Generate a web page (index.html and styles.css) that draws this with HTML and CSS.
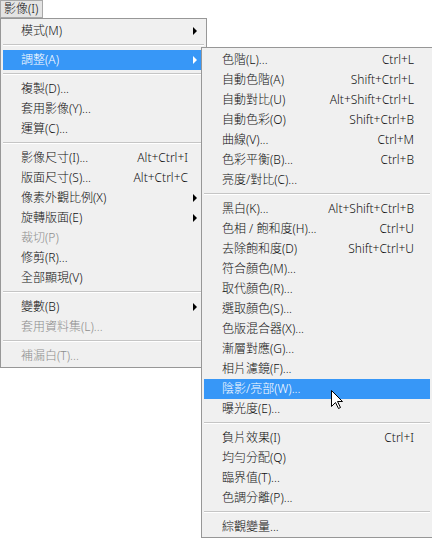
FILE: index.html
```html
<!DOCTYPE html>
<html lang="zh-Hant">
<head>
<meta charset="utf-8">
<title>影像選單</title>
<link rel="stylesheet" href="styles.css">
</head>
<body>
<div class="menubar"><span class="menutitle">影像(I)</span></div>
<ul class="menu main">
  <li class="item"><span class="label">模式(M)</span><span class="key"></span><span class="arrow"></span></li>
  <li class="sep"></li>
  <li class="item active"><span class="label">調整(A)</span><span class="key"></span><span class="arrow"></span></li>
  <li class="sep"></li>
  <li class="item"><span class="label">複製(D)...</span><span class="key"></span><span></span></li>
  <li class="item"><span class="label">套用影像(Y)...</span><span class="key"></span><span></span></li>
  <li class="item"><span class="label">運算(C)...</span><span class="key"></span><span></span></li>
  <li class="sep"></li>
  <li class="item"><span class="label">影像尺寸(I)...</span><span class="key">Alt+Ctrl+I</span><span></span></li>
  <li class="item"><span class="label">版面尺寸(S)...</span><span class="key">Alt+Ctrl+C</span><span></span></li>
  <li class="item"><span class="label">像素外觀比例(X)</span><span class="key"></span><span class="arrow"></span></li>
  <li class="item"><span class="label">旋轉版面(E)</span><span class="key"></span><span class="arrow"></span></li>
  <li class="item disabled"><span class="label">裁切(P)</span><span class="key"></span><span></span></li>
  <li class="item"><span class="label">修剪(R)...</span><span class="key"></span><span></span></li>
  <li class="item"><span class="label">全部顯現(V)</span><span class="key"></span><span></span></li>
  <li class="sep"></li>
  <li class="item"><span class="label">變數(B)</span><span class="key"></span><span class="arrow"></span></li>
  <li class="item disabled"><span class="label">套用資料集(L)...</span><span class="key"></span><span></span></li>
  <li class="sep"></li>
  <li class="item disabled"><span class="label">補漏白(T)...</span><span class="key"></span><span></span></li>
</ul>
<ul class="menu sub">
  <li class="item"><span class="label">色階(L)...</span><span class="key">Ctrl+L</span><span></span></li>
  <li class="item"><span class="label">自動色階(A)</span><span class="key">Shift+Ctrl+L</span><span></span></li>
  <li class="item"><span class="label">自動對比(U)</span><span class="key">Alt+Shift+Ctrl+L</span><span></span></li>
  <li class="item"><span class="label">自動色彩(O)</span><span class="key">Shift+Ctrl+B</span><span></span></li>
  <li class="item"><span class="label">曲線(V)...</span><span class="key">Ctrl+M</span><span></span></li>
  <li class="item"><span class="label">色彩平衡(B)...</span><span class="key">Ctrl+B</span><span></span></li>
  <li class="item"><span class="label">亮度/對比(C)...</span><span class="key"></span><span></span></li>
  <li class="sep"></li>
  <li class="item"><span class="label">黑白(K)...</span><span class="key">Alt+Shift+Ctrl+B</span><span></span></li>
  <li class="item"><span class="label">色相 / 飽和度(H)...</span><span class="key">Ctrl+U</span><span></span></li>
  <li class="item"><span class="label">去除飽和度(D)</span><span class="key">Shift+Ctrl+U</span><span></span></li>
  <li class="item"><span class="label">符合顏色(M)...</span><span class="key"></span><span></span></li>
  <li class="item"><span class="label">取代顏色(R)...</span><span class="key"></span><span></span></li>
  <li class="item"><span class="label">選取顏色(S)...</span><span class="key"></span><span></span></li>
  <li class="item"><span class="label">色版混合器(X)...</span><span class="key"></span><span></span></li>
  <li class="item"><span class="label">漸層對應(G)...</span><span class="key"></span><span></span></li>
  <li class="item"><span class="label">相片濾鏡(F)...</span><span class="key"></span><span></span></li>
  <li class="item active"><span class="label">陰影/亮部(W)...</span><span class="key"></span><span></span></li>
  <li class="item"><span class="label">曝光度(E)...</span><span class="key"></span><span></span></li>
  <li class="sep"></li>
  <li class="item"><span class="label">負片效果(I)</span><span class="key">Ctrl+I</span><span></span></li>
  <li class="item"><span class="label">均勻分配(Q)</span><span class="key"></span><span></span></li>
  <li class="item"><span class="label">臨界值(T)...</span><span class="key"></span><span></span></li>
  <li class="item"><span class="label">色調分離(P)...</span><span class="key"></span><span></span></li>
  <li class="sep"></li>
  <li class="item"><span class="label">綜觀變量...</span><span class="key"></span><span></span></li>
</ul>
<svg class="cursor" width="13" height="20" viewBox="0 0 13 20">
  <path d="M0.5 0.5 L0.5 16.5 L4.5 12.5 L7.5 18.5 L9.5 17.5 L6.5 11.5 L11.5 11.5 Z" fill="#fff" stroke="#000" stroke-width="1" stroke-linejoin="miter"/>
</svg>
</body>
</html>
```
FILE: styles.css
```css
html, body {
  margin: 0;
  padding: 0;
  background: #ffffff;
}
body {
  width: 432px;
  height: 539px;
  overflow: hidden;
  position: relative;
  font-family: "Noto Sans", "Noto Sans CJK TC", sans-serif;
  font-size: 12px;
  font-weight: 300;
  color: #111;
}
.menubar {
  height: 18px;
  display: flex;
}
.menutitle {
  box-sizing: border-box;
  height: 18px;
  padding: 0 4px 0 3px;
  line-height: 16px;
  border: 1px solid #a8a8a8;
  background: #e4e4e4;
}
.menu {
  list-style: none;
  margin: 0;
  background: #f0f0f0;
  border: 1px solid #979797;
  box-sizing: border-box;
}
.main {
  width: 207px;
  padding: 2px 2px 1px 2px;
}
.sub {
  position: absolute;
  left: 201px;
  top: 47px;
  width: 231px;
  padding: 2px 2px 0 2px;
  border-right: none;
}
.item {
  display: grid;
  grid-template-columns: 1fr auto 16px;
  align-items: center;
  height: 20px;
  padding-left: 18px;
  white-space: nowrap;
  line-height: 20px;
}
.item.active {
  background: #3797f7;
  color: #fff;
}
.item.disabled {
  color: #8d8d8d;
}
.key {
  text-align: right;
}
.arrow {
  width: 0;
  height: 0;
  margin-left: 5px;
  border-left: 4px solid #000;
  border-top: 4px solid transparent;
  border-bottom: 4px solid transparent;
}
.active .arrow {
  border-left-color: #fff;
}
.sep {
  height: 0;
  margin: 3px 0 4px 0;
  border-top: 1px solid #c5c5c5;
  border-bottom: 1px solid #ffffff;
}
.cursor {
  position: absolute;
  left: 331px;
  top: 390px;
}
```
